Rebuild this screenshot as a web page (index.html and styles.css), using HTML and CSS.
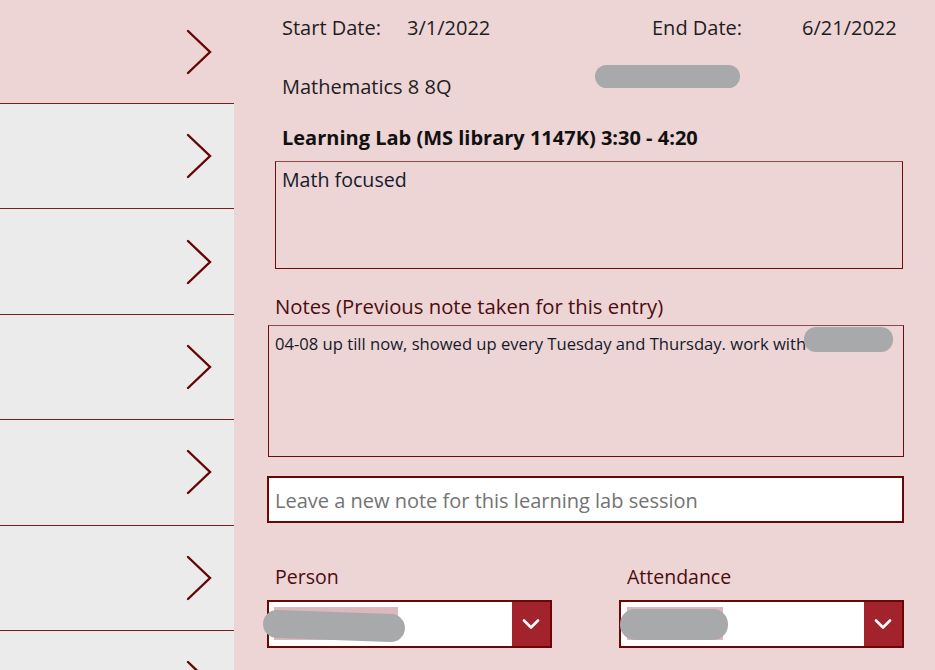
FILE: index.html
```html
<!DOCTYPE html>
<html>
<head>
<meta charset="utf-8">
<link rel="stylesheet" href="styles.css">
</head>
<body>
<div class="app">
  <nav class="sidebar">
    <div class="row row-first"><svg class="chev" viewBox="0 0 26 46" width="26" height="46"><polyline points="2,2 24,23 2,44"/></svg></div>
    <div class="row"><svg class="chev" viewBox="0 0 26 46" width="26" height="46"><polyline points="2,2 24,23 2,44"/></svg></div>
    <div class="row"><svg class="chev" viewBox="0 0 26 46" width="26" height="46"><polyline points="2,2 24,23 2,44"/></svg></div>
    <div class="row"><svg class="chev" viewBox="0 0 26 46" width="26" height="46"><polyline points="2,2 24,23 2,44"/></svg></div>
    <div class="row"><svg class="chev" viewBox="0 0 26 46" width="26" height="46"><polyline points="2,2 24,23 2,44"/></svg></div>
    <div class="row"><svg class="chev" viewBox="0 0 26 46" width="26" height="46"><polyline points="2,2 24,23 2,44"/></svg></div>
    <div class="row"><svg class="chev" viewBox="0 0 26 46" width="26" height="46"><polyline points="2,2 24,23 2,44"/></svg></div>
  </nav>
  <main class="detail">
    <div class="dates">
      <span class="d-label">Start Date:</span>
      <span class="d-value">3/1/2022</span>
      <span class="d-label2">End Date:</span>
      <span class="d-value2">6/21/2022</span>
    </div>
    <div class="course">Mathematics 8 8Q<span class="redact redact-course"></span></div>
    <div class="title">Learning Lab (MS library 1147K) 3:30 - 4:20</div>
    <div class="box desc">Math focused</div>
    <div class="label notes-label">Notes (Previous note taken for this entry)</div>
    <div class="box notes">04-08 up till now, showed up every Tuesday and Thursday. work with<span class="redact redact-notes"></span></div>
    <div class="input">Leave a new note for this learning lab session</div>
    <div class="fields">
      <div class="field">
        <div class="label">Person</div>
        <div class="select">
          <div class="select-value"><span class="hl hl-person"></span><span class="redact redact-person"></span></div>
          <div class="select-btn"><svg viewBox="0 0 18 10" width="18" height="10"><polyline points="2,1.5 9,8.5 16,1.5"/></svg></div>
        </div>
      </div>
      <div class="field">
        <div class="label">Attendance</div>
        <div class="select">
          <div class="select-value"><span class="hl hl-att"></span><span class="redact redact-att"></span></div>
          <div class="select-btn"><svg viewBox="0 0 18 10" width="18" height="10"><polyline points="2,1.5 9,8.5 16,1.5"/></svg></div>
        </div>
      </div>
    </div>
  </main>
</div>
</body>
</html>
```
FILE: styles.css
```css
* { box-sizing: border-box; }
html, body { margin: 0; padding: 0; }
body {
  width: 935px;
  height: 670px;
  overflow: hidden;
  background: #edd4d5;
  font-family: "Open Sans", "Liberation Sans", sans-serif;
  font-stretch: 90%;
  color: #1d1d1f;
}
.app { display: flex; height: 670px; overflow: hidden; }
.sidebar {
  width: 234px;
  flex: none;
  background: #ebebeb;
  display: flex;
  flex-direction: column;
  overflow: hidden;
}
.row {
  flex: none;
  height: 105.4px;
  border-bottom: 1px solid #7d1c1c;
  display: flex;
  align-items: center;
  justify-content: flex-end;
  padding-right: 22px;
}
.row-first { height: 104px; background: #edd4d5; }
.chev polyline {
  fill: none;
  stroke: #650505;
  stroke-width: 2.4;
  stroke-linecap: round;
}
.detail { flex: 1; position: relative; }
.dates {
  display: flex;
  height: 56px;
  line-height: 56px;
  font-size: 20px;
  padding-left: 48px;
}
.d-label { width: 125px; }
.d-value { width: 245px; }
.d-label2 { width: 150px; }
.course {
  position: relative;
  height: 62px;
  line-height: 62px;
  font-size: 20px;
  padding-left: 48px;
}
.title {
  height: 40px;
  line-height: 40px;
  font-size: 20px;
  font-weight: 700;
  padding-left: 48px;
  color: #111;
}
.box {
  border: 1px solid #6e0b0b;
  border-top-color: #8e4a4a;
  color: #141a2a;
}
.desc {
  margin: 3px 32px 0 41px;
  height: 108px;
  padding: 5px 0 0 6px;
  font-size: 19.6px;
  line-height: 26px;
}
.label {
  color: #4a0d10;
  font-size: 19.5px;
  line-height: 38px;
}
.notes-label {
  margin: 18px 0 0 41px;
  font-size: 20.3px;
}
.notes {
  position: relative;
  margin: 0 31px 0 34px;
  height: 132px;
  padding: 6px 0 0 6px;
  font-size: 16.6px;
  line-height: 24px;
}
.input {
  margin: 19px 31px 0 33px;
  height: 47px;
  border: 2px solid #6a0808;
  background: #fff;
  color: #737373;
  font-size: 20px;
  line-height: 45px;
  padding-left: 6px;
}
.fields {
  display: flex;
  gap: 67px;
  margin: 35px 31px 0 33px;
}
.field { width: 285px; }
.field .label { padding-left: 8px; margin-bottom: 4px; }
.select {
  display: flex;
  height: 48px;
  border: 2px solid #6a0808;
  background: #fff;
}
.select-value { flex: 1; position: relative; }
.select-btn {
  width: 38px;
  background: #a3232d;
  display: flex;
  align-items: center;
  justify-content: center;
}
.select-btn polyline {
  fill: none;
  stroke: #fff;
  stroke-width: 2.6;
  stroke-linecap: round;
  stroke-linejoin: round;
}
.redact {
  position: absolute;
  background: #a8a9ab;
  border-radius: 12px;
}
.redact-course { left: 361px; top: 9px; width: 145px; height: 23px; }
.redact-notes { left: 535px; top: 1px; width: 89px; height: 25px; }
.hl { position: absolute; background: #dcb7bb; }
.hl-person { left: 5px; top: 5px; width: 124px; height: 33px; }
.hl-att { left: 6px; top: 5px; width: 96px; height: 33px; }
.redact-person { left: -6px; top: 10px; width: 142px; height: 28px; border-radius: 14px; transform: rotate(2deg); }
.redact-att { left: -1px; top: 7px; width: 108px; height: 31px; border-radius: 15px; }
```
